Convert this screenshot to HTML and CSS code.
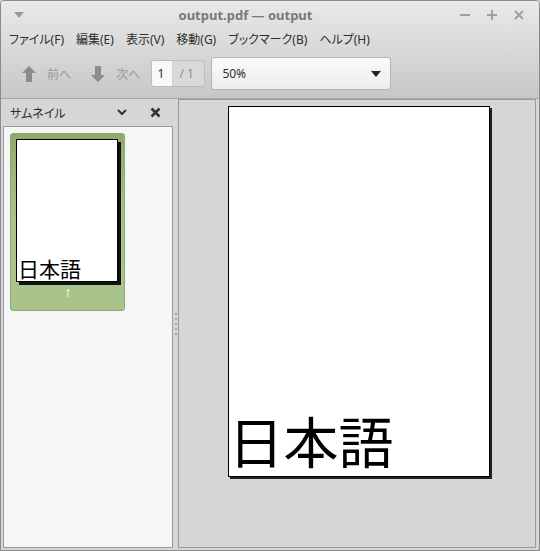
FILE: index.html
```html
<!DOCTYPE html>
<html lang="ja">
<head>
  <meta charset="UTF-8">
  <title>output.pdf — output</title>
  <link rel="stylesheet" href="styles.css">
</head>
<body>
  <div class="window">
    <div class="header">
      <div class="titlebar">
        <svg class="menu-arrow" width="10" height="6" viewBox="0 0 10 6"><path d="M0 0 L10 0 L5 6 Z" fill="#9a9a9a"/></svg>
        <div class="title">output.pdf — output</div>
        <div class="win-buttons">
          <svg width="12" height="12" viewBox="0 0 12 12"><rect x="1" y="5" width="10" height="2" fill="#a0a0a0"/></svg>
          <svg width="12" height="12" viewBox="0 0 12 12"><rect x="1" y="5" width="10" height="2" fill="#a0a0a0"/><rect x="5" y="1" width="2" height="10" fill="#a0a0a0"/></svg>
          <svg width="12" height="12" viewBox="0 0 12 12"><path d="M2 2 L10 10 M10 2 L2 10" stroke="#a0a0a0" stroke-width="2"/></svg>
        </div>
      </div>
      <div class="menubar">
        <span>ファイル(F)</span>
        <span>編集(E)</span>
        <span>表示(V)</span>
        <span>移動(G)</span>
        <span>ブックマーク(B)</span>
        <span>ヘルプ(H)</span>
      </div>
      <div class="toolbar">
        <div class="tool-btn">
          <svg width="14" height="16" viewBox="0 0 14 16"><path d="M7 0 L14 7 L10 7 L10 16 L4 16 L4 7 L0 7 Z" fill="#8c8c8c"/></svg>
          <span>前へ</span>
        </div>
        <div class="tool-btn">
          <svg width="14" height="16" viewBox="0 0 14 16"><path d="M7 16 L14 9 L10 9 L10 0 L4 0 L4 9 L0 9 Z" fill="#8c8c8c"/></svg>
          <span>次へ</span>
        </div>
        <div class="page-entry">
          <span class="page-current">1</span>
          <span class="page-total">/ 1</span>
        </div>
        <div class="zoom-combo">
          <span>50%</span>
          <svg width="10" height="6" viewBox="0 0 10 6"><path d="M0 0 L10 0 L5 6 Z" fill="#222"/></svg>
        </div>
      </div>
    </div>

    <div class="content">
      <div class="sidebar">
        <div class="sidebar-header">
          <span class="sidebar-title">サムネイル</span>
          <svg class="chevron" width="10" height="7" viewBox="0 0 10 7"><path d="M1 1 L5 5 L9 1" stroke="#333" stroke-width="2" fill="none"/></svg>
          <svg class="close" width="11" height="11" viewBox="0 0 11 11"><path d="M1.5 1.5 L9.5 9.5 M9.5 1.5 L1.5 9.5" stroke="#333" stroke-width="2.6"/></svg>
        </div>
        <div class="thumb-list">
          <div class="thumb selected">
            <div class="thumb-page">
              <span class="thumb-text">日本語</span>
            </div>
            <div class="thumb-label">1</div>
          </div>
        </div>
      </div>

      <div class="pane-grip">
        <span></span><span></span><span></span><span></span><span></span>
      </div>

      <div class="view">
        <div class="page">
          <span class="page-text">日本語</span>
        </div>
      </div>
    </div>
  </div>
</body>
</html>
```

FILE: styles.css
```css
html, body {
  margin: 0;
  padding: 0;
}

body {
  width: 540px;
  height: 551px;
  font-family: "Noto Sans", "Noto Sans CJK JP", sans-serif;
  font-feature-settings: "palt";
  font-size: 12px;
  color: #2e2e2e;
  background-color: #d6d6d6;
}

.window {
  width: 540px;
  height: 551px;
  box-sizing: border-box;
  border: 1px solid #8a8a8a;
  border-radius: 4px 4px 0 0;
  display: flex;
  flex-direction: column;
  overflow: hidden;
  background-color: #d6d6d6;
}

.header {
  height: 97px;
  background: linear-gradient(to bottom, #e9e9e9, #dcdcdc 40%, #c7c7c7);
  border-bottom: 1px solid #a8a8a8;
  display: flex;
  flex-direction: column;
}

.titlebar {
  height: 27px;
  display: flex;
  align-items: center;
  padding: 0 13px;
}

.title {
  flex: 1;
  text-align: center;
  font-weight: bold;
  font-size: 13px;
  color: #787878;
  padding-left: 8px;
}

.win-buttons {
  display: flex;
  gap: 15px;
  padding-right: 1px;
}

.menubar {
  height: 22px;
  display: flex;
  align-items: center;
  padding-left: 8px;
  gap: 12px;
}

.toolbar {
  flex: 1;
  display: flex;
  align-items: center;
  padding-left: 21px;
  padding-bottom: 1px;
}

.tool-btn {
  display: flex;
  align-items: center;
  gap: 11px;
  color: #9a9a9a;
  margin-right: 20px;
}

.tool-btn:nth-child(2) {
  margin-right: 11px;
}

.page-entry {
  display: flex;
  height: 25px;
  border: 1px solid #bcbcbc;
  border-radius: 3px;
  overflow: hidden;
  margin-right: 6px;
}

.page-current {
  width: 21px;
  padding-left: 5px;
  box-sizing: border-box;
  background-color: #f8f8f8;
  border-right: 1px solid #d0d0d0;
  line-height: 25px;
  font-size: 12px;
}

.page-total {
  width: 31px;
  padding-left: 6px;
  box-sizing: border-box;
  background-color: #d9d9d9;
  color: #8c8c8c;
  line-height: 25px;
}

.zoom-combo {
  width: 180px;
  height: 33px;
  box-sizing: border-box;
  border: 1px solid #b4b4b4;
  border-radius: 3px;
  background: linear-gradient(to bottom, #fbfbfb, #ececec);
  display: flex;
  align-items: center;
  justify-content: space-between;
  padding: 0 9px 0 10px;
}

.content {
  flex: 1;
  display: flex;
  padding-bottom: 2px;
}

.sidebar {
  width: 172px;
  box-sizing: border-box;
  padding-left: 2px;
  display: flex;
  flex-direction: column;
}

.sidebar-header {
  height: 27px;
  display: flex;
  align-items: center;
  padding-left: 7px;
}

.sidebar-title {
  flex: 1;
}

.chevron {
  margin-right: 23px;
}

.close {
  margin-right: 12px;
}

.thumb-list {
  flex: 1;
  width: 170px;
  box-sizing: border-box;
  border: 1px solid #9a9a9a;
  background-color: #f6f6f6;
  padding: 6px;
}

.thumb {
  width: 115px;
  height: 178px;
  box-sizing: border-box;
  border: 1px solid #8ea86f;
  border-radius: 3px;
  padding: 5px;
}

.thumb.selected {
  background: linear-gradient(to bottom, #8eaa6e, #a8c38a 45%, #a8c48b);
}

.thumb-page {
  width: 102px;
  height: 143px;
  box-sizing: border-box;
  background-color: #fff;
  border: 1px solid #000;
  box-shadow: 3px 3px 0 #111;
  display: flex;
  align-items: flex-end;
  font-family: "Noto Sans CJK JP", sans-serif;
}

.thumb-text {
  font-size: 21px;
  line-height: 26px;
  padding-left: 1px;
  color: #000;
}

.thumb-label {
  text-align: center;
  font-size: 11px;
  font-style: italic;
  color: #eef4e6;
  margin-top: 3px;
}

.pane-grip {
  width: 5px;
  display: flex;
  flex-direction: column;
  align-items: center;
  justify-content: center;
  gap: 3px;
}

.pane-grip span {
  width: 2px;
  height: 2px;
  background-color: #a8a8a8;
}

.view {
  width: 358px;
  box-sizing: border-box;
  border: 1px solid #9a9a9a;
  background-color: #d6d6d6;
  display: flex;
  justify-content: center;
  padding-top: 6px;
  padding-left: 3px;
}

.page {
  width: 262px;
  height: 371px;
  box-sizing: border-box;
  background-color: #fff;
  border: 1px solid #000;
  box-shadow: 2px 2px 0 #222;
  display: flex;
  align-items: flex-end;
  font-family: "Noto Sans CJK JP", sans-serif;
}

.page-text {
  font-size: 55px;
  line-height: 74px;
  padding-left: 0;
  color: #000;
}
```
